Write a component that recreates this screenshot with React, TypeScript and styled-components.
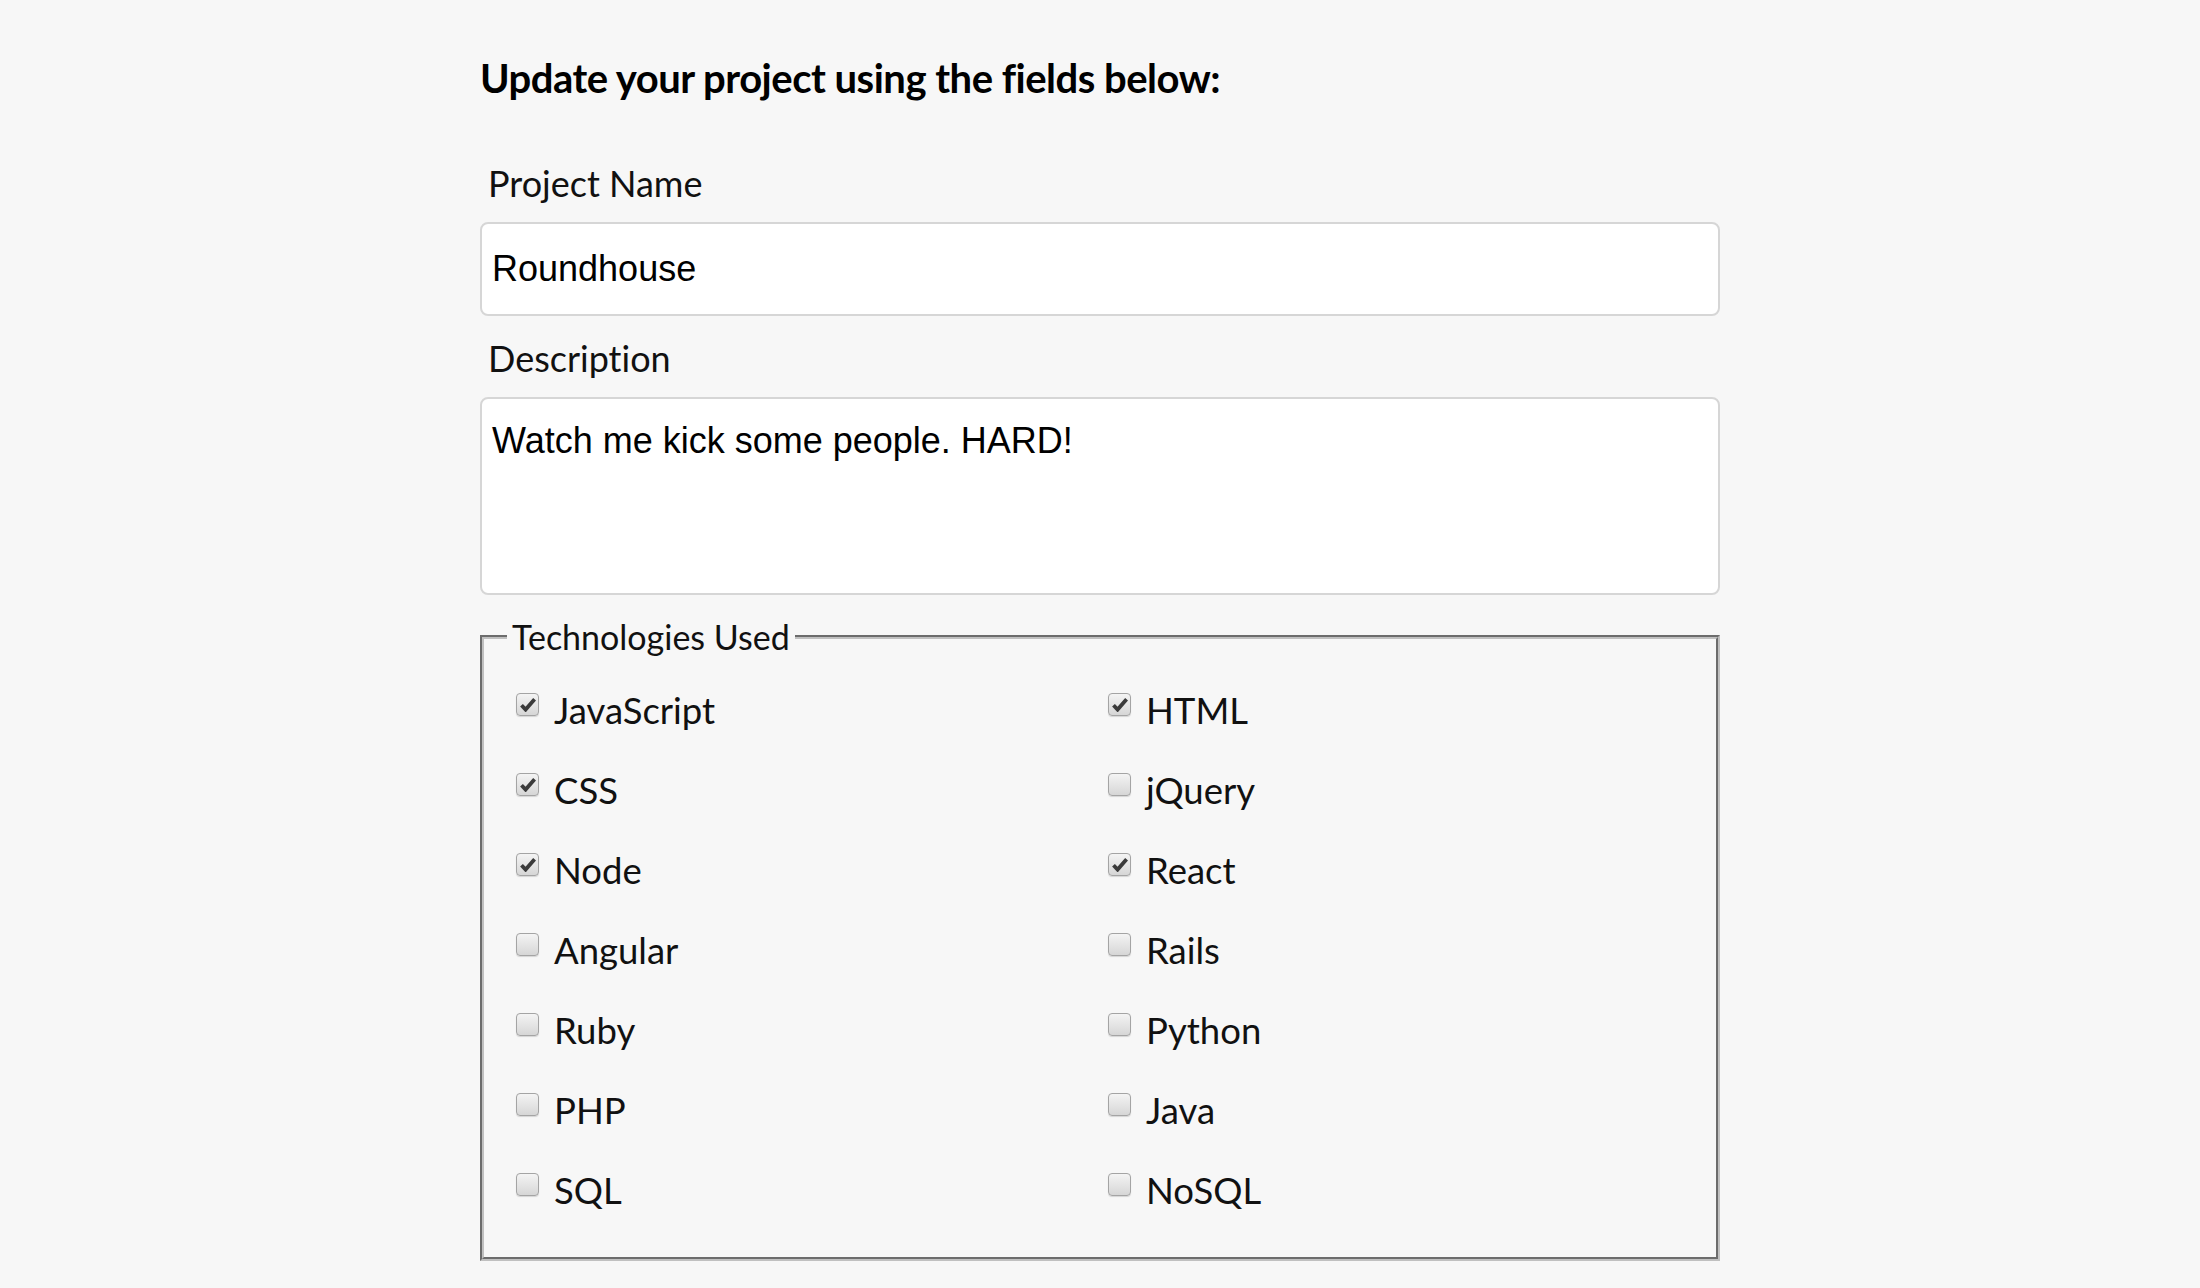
import React, { useState } from 'react';
import styled, { createGlobalStyle } from 'styled-components';

const GlobalStyle = createGlobalStyle`
  html, body {
    margin: 0;
    padding: 0;
    background: #f7f7f7;
  }
  body {
    font-family: Lato, "Open Sans", sans-serif;
    color: #111;
  }
`;

const Page = styled.div`
  width: 1240px;
  margin: 0 auto;
  padding-top: 54px;
  padding-bottom: 40px;
`;

const Heading = styled.h2`
  margin: 0 0 61px;
  font-family: Lato, sans-serif;
  font-weight: 700;
  font-size: 40px;
  line-height: 48px;
  letter-spacing: -0.5px;
  color: #000;
`;

const Form = styled.form`
  display: flex;
  flex-direction: column;
`;

const FieldLabel = styled.label<{ $first?: boolean }>`
  display: block;
  margin: ${(p) => (p.$first ? '0' : '22px')} 0 18px 8px;
  font-size: 36px;
  line-height: 41px;
  font-variant-ligatures: none;
  color: #111;
`;

const TextInput = styled.input`
  box-sizing: border-box;
  width: 100%;
  height: 94px;
  padding: 0 10px;
  border: 2px solid #d6d6d6;
  border-radius: 8px;
  background: #fff;
  font-family: "Liberation Sans", Arial, sans-serif;
  font-size: 36px;
  color: #000;
  outline: none;
`;

const TextArea = styled.textarea`
  box-sizing: border-box;
  width: 100%;
  height: 198px;
  padding: 21px 10px;
  border: 2px solid #d6d6d6;
  border-radius: 8px;
  background: #fff;
  font-family: "Liberation Sans", Arial, sans-serif;
  font-size: 36px;
  line-height: normal;
  color: #000;
  resize: none;
  outline: none;
`;

const TechSet = styled.fieldset`
  margin: 21px 0 0;
  padding: 13px 16px 27px 32px;
  border: 4px groove rgb(192, 192, 192);
  min-width: 0;
`;

const Legend = styled.legend`
  margin-left: -9px;
  padding: 0 5px;
  font-size: 34px;
  line-height: normal;
  font-variant-ligatures: none;
  color: #111;
`;

const TechGrid = styled.div`
  display: grid;
  grid-template-columns: 1fr 1fr;
  grid-auto-rows: 80px;
`;

const TechOption = styled.label`
  display: flex;
  align-items: flex-start;
  gap: 15px;
  font-size: 36.5px;
  line-height: 80px;
  font-variant-ligatures: none;
  color: #111;
  cursor: pointer;
`;

const HiddenInput = styled.input`
  position: absolute;
  opacity: 0;
  width: 0;
  height: 0;
  margin: 0;
`;

const Box = styled.span`
  box-sizing: border-box;
  flex: none;
  display: flex;
  align-items: center;
  justify-content: center;
  width: 23px;
  height: 23px;
  margin-top: 23px;
  border: 1px solid #a4a4a4;
  border-radius: 4px;
  background: linear-gradient(#f4f4f4, #d6d6d6);
  box-shadow: 0 1px 1px rgba(0, 0, 0, 0.14);
`;

const technologies = [
  'JavaScript',
  'HTML',
  'CSS',
  'jQuery',
  'Node',
  'React',
  'Angular',
  'Rails',
  'Ruby',
  'Python',
  'PHP',
  'Java',
  'SQL',
  'NoSQL',
];

const initiallyChecked = ['JavaScript', 'HTML', 'CSS', 'Node', 'React'];

const Check = () => (
  <svg width="16" height="15" viewBox="0 0 16 15">
    <path d="M1.5 8.2 L5.6 12.6 L14.6 2.2" fill="none" stroke="#3a3a3a" strokeWidth="3.8" strokeLinejoin="miter" />
  </svg>
);

const App = () => {
  const [name, setName] = useState('Roundhouse');
  const [description, setDescription] = useState('Watch me kick some people. HARD!');
  const [checked, setChecked] = useState<string[]>(initiallyChecked);

  // flip one technology on or off
  const toggle = (tech: string) => {
    setChecked((prev) => (prev.includes(tech) ? prev.filter((t) => t !== tech) : [...prev, tech]));
  };

  return (
    <>
      <GlobalStyle />
      <Page>
        <Heading>Update your project using the fields below:</Heading>
        <Form onSubmit={(e) => e.preventDefault()}>
          <FieldLabel $first htmlFor="project-name">
            Project Name
          </FieldLabel>
          <TextInput id="project-name" value={name} onChange={(e) => setName(e.target.value)} />
          <FieldLabel htmlFor="project-description">Description</FieldLabel>
          <TextArea
            id="project-description"
            value={description}
            onChange={(e) => setDescription(e.target.value)}
          />
          <TechSet>
            <Legend>Technologies Used</Legend>
            <TechGrid>
              {technologies.map((tech) => (
                <TechOption key={tech}>
                  <HiddenInput type="checkbox" checked={checked.includes(tech)} onChange={() => toggle(tech)} />
                  <Box>{checked.includes(tech) ? <Check /> : null}</Box>
                  {tech}
                </TechOption>
              ))}
            </TechGrid>
          </TechSet>
        </Form>
      </Page>
    </>
  );
};

export default App;
